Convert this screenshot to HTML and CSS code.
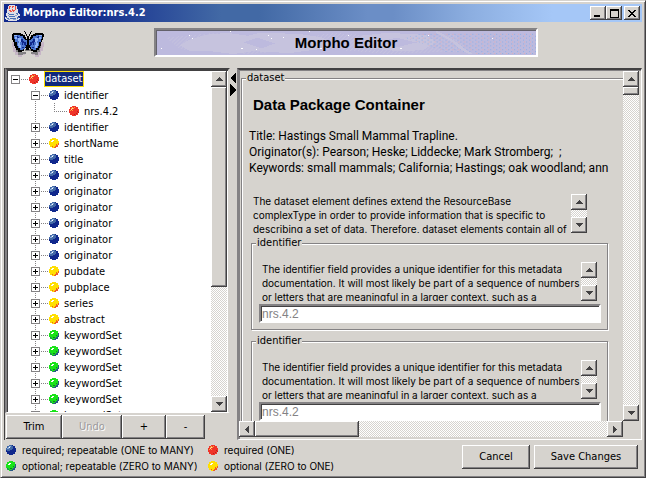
FILE: index.html
```
<!DOCTYPE html>
<html lang="en">
<head>
<meta charset="utf-8">
<title>Morpho Editor:nrs.4.2</title>
<link rel="stylesheet" href="styles.css">
</head>
<body>
<svg class="defs" aria-hidden="true">
  <symbol id="ball-blue" viewBox="0 0 10 10" shape-rendering="crispEdges">
    <path fill="#10288c" d="M3 0h4v1h2v2h1v4h-1v2h-2v1h-4v-1h-2v-2h-1v-4h1v-2h2z"/>
    <path fill="#4269a5" d="M3 0h3v1h1v3h-1v1h-2v1h-3v-1h-1v-2h1v-2h2z"/>
    <path fill="#8caede" d="M3 1h2v1h-2zM2 2h2v1h-2zM1 3h2v1h-2z"/>
    <path fill="#fff" d="M3 2h1v1h-1z"/>
  </symbol>
  <symbol id="ball-red" viewBox="0 0 10 10" shape-rendering="crispEdges">
    <path fill="#ef3429" d="M3 0h4v1h2v2h1v4h-1v2h-2v1h-4v-1h-2v-2h-1v-4h1v-2h2z"/>
    <path fill="#ffa23a" d="M3 1h1v1h-1zM5 1h1v1h-1zM2 2h1v1h-1zM4 2h1v1h-1zM1 4h1v1h-1zM3 4h1v1h-1z"/>
    <path fill="#ffdf9c" d="M3 2h1v1h-1zM2 3h1v1h-1z"/>
    <path fill="#b52020" d="M8 5h1v1h-1zM7 7h1v1h-1zM5 8h1v1h-1zM9 6h1v1h-1z"/>
  </symbol>
  <symbol id="ball-yellow" viewBox="0 0 10 10" shape-rendering="crispEdges">
    <path fill="#ffdf00" d="M3 0h4v1h2v2h1v4h-1v2h-2v1h-4v-1h-2v-2h-1v-4h1v-2h2z"/>
    <path fill="#fff" d="M3 2h2v1h-1v1h-2v-1h1z"/>
    <path fill="#ef5929" d="M9 5h1v2h-1v1h-1v-1h1zM7 6h1v1h-1zM6 8h1v-1h1v1h1v1h-2v1h-2v-1h1zM3 8h1v1h-1z"/>
  </symbol>
  <symbol id="ball-green" viewBox="0 0 10 10" shape-rendering="crispEdges">
    <path fill="#19e319" d="M3 0h4v1h2v2h1v4h-1v2h-2v1h-4v-1h-2v-2h-1v-4h1v-2h2z"/>
    <path fill="#fff" d="M3 2h2v1h-1v1h-2v-1h1z"/>
    <path fill="#295984" d="M9 3h1v4h-1v2h-2v1h-3v-1h2v-1h1v-1h1v-1h1zM1 7h1v1h1v1h-1z"/>
    <path fill="#107a29" d="M4 7h2v1h-2zM7 5h1v1h-1z"/>
  </symbol>
  <symbol id="up" viewBox="0 0 7 4" shape-rendering="crispEdges"><path fill="#424142" d="M3 0h1v1h1v1h1v1h1v1h-7v-1h1v-1h1v-1h1z"/></symbol>
  <symbol id="down" viewBox="0 0 7 4" shape-rendering="crispEdges"><path fill="#424142" d="M0 0h7v1h-1v1h-1v1h-1v1h-1v-1h-1v-1h-1v-1h-1z"/></symbol>
  <symbol id="left" viewBox="0 0 4 7" shape-rendering="crispEdges"><path fill="#424142" d="M4 0v7h-1v-1h-1v-1h-1v-1h-1v-1h1v-1h1v-1h1v-1z"/></symbol>
  <symbol id="right" viewBox="0 0 4 7" shape-rendering="crispEdges"><path fill="#424142" d="M0 0v7h1v-1h1v-1h1v-1h1v-1h-1v-1h-1v-1h-1v-1z"/></symbol>
</svg>

<div class="window">
  <header class="titlebar">
    <svg class="java" viewBox="0 0 16 16" shape-rendering="crispEdges" aria-hidden="true">
      <path fill="#dedfe7" d="M4 0h6v1h2v3h1v4h1v1h1v2h-2v2h2v1h-1v1h-2v1h-9v-1h-2v-1h-1v-2h2v-1h-1v-3h1v-4h1v-3z"/>
      <path fill="#ef5142" d="M4 1h2v1h-1v2h-1zM7 1h2v1h-1v1h-1zM10 1h1v4h-1zM4 5h2v1h1v1h-2v-1h-1zM7 4h1v1h2v1h-1v1h-1v-1h-1z"/>
      <path fill="#4a71b5" d="M3 8h1v1h5v1h-5v-1h-1zM11 8h2v2h-1v-1h-1zM4 11h6v1h-6zM1 12h1v1h2v1h-2v-1h-1zM5 13h6v1h-6zM12 12h2v1h-1v1h-1z"/>
      <path fill="#94a6ce" d="M3 10h1v1h-1zM10 10h1v1h-1zM3 14h2v1h-2zM8 14h3v1h-3zM11 10h1v1h-1z"/>
    </svg>
    <h1>Morpho Editor:nrs.4.2</h1>
    <div class="window-buttons">
      <button class="raised" aria-label="Minimize"><svg width="8" height="8" shape-rendering="crispEdges"><path d="M0 6h6v2h-6z"/></svg></button>
      <button class="raised" aria-label="Maximize"><svg width="9" height="9" shape-rendering="crispEdges"><path fill-rule="evenodd" d="M0 0h9v9h-9zM1 2v6h7v-6z"/></svg></button>
      <button class="raised close" aria-label="Close"><svg width="8" height="7" shape-rendering="crispEdges"><path d="M0 0h2v1h1v1h2v-1h1v-1h2v1h-1v1h-1v1h-1v1h1v1h1v1h1v1h-2v-1h-1v-1h-2v1h-1v1h-2v-1h1v-1h1v-1h1v-1h-1v-1h-1v-1h-1z"/></svg></button>
    </div>
  </header>

  <div class="brand">
    <svg class="butterfly" viewBox="0 0 32 26" shape-rendering="crispEdges" aria-hidden="true">
      <path fill="#c6b6c6" d="M0 11h5v6h4v5h4v2h-3v2h-4v-2h-3v-3h-2v-5h-1zM31 11h-4v6h-3v4h-4v3h3v2h4v-2h2v-4h2v-4h1v-4z"/>
      <path fill="#848284" d="M3 13h3v5h3v3h5v2h-3v1h-5v-3h-2v-4h-1zM29 13h-3v5h-3v3h-4v2h4v1h3v-3h2v-4h1zM13 18h6v2h-6z"/>
      <path fill="#000" d="M1 2h8v1h2v1h2v2h1v2h1v-3h-1v-2h-1v-2h-1v-1h1v1h1v2h1v2h2v-2h1v-2h1v-1h1v1h-1v2h-1v2h-1v3h1v-2h1v-2h2v-1h2v-1h8v1h1v3h-1v3h-1v2h-1v4h-1v2h-1v2h-2v2h-4v-1h-2v-2h-1v-1h-1v2h-3v-2h-1v1h-1v2h-2v1h-4v-2h-2v-2h-1v-2h-1v-4h-1v-2h-1v-3h-1v-3h1z"/>
      <path fill="#4a75ce" d="M2 4h6v1h3v2h1v1h1v1h2v5h-1v2h-1v2h-2v1h-3v-2h-2v-2h-1v-4h-2v-3h-1zM30 4h-6v1h-3v2h-1v1h-1v1h-2v5h1v2h1v2h2v1h3v-2h2v-2h1v-4h2v-3h1z"/>
      <path fill="#94b6f7" d="M2 4h3v1h-3zM6 7h3v1h1v1h-1v2h-1v3h1v3h-2v-2h-1v-3h1v-2h-1zM3 6h2v2h-2zM30 4h-3v1h3zM26 7h-3v1h-1v1h1v2h1v3h-1v3h2v-2h1v-3h-1v-2h1zM29 6h-2v2h2z"/>
      <path fill="#10288c" d="M5 5h1v1h1v1h-2zM9 8h2v2h1v1h2v4h-1v-1h-1v-2h-1v2h-1v-3h-1zM10 16h2v1h-2zM27 5h-1v1h-1v1h2zM23 8h-2v2h-1v1h-2v4h1v-1h1v-2h1v2h1v-3h1zM22 16h-2v1h2z"/>
    </svg>
    <div class="banner">
      <svg class="sky" viewBox="0 0 382 26" preserveAspectRatio="none" aria-hidden="true">
        <defs>
          <pattern id="mist" width="4" height="4" patternUnits="userSpaceOnUse"><path fill="#c6c3de" d="M0 0h1v1h-1zM2 2h1v1h-1zM1 3h1v1h-1zM3 1h1v1h-1z"/></pattern>
          <pattern id="haze" width="6" height="4" patternUnits="userSpaceOnUse"><path fill="#8caee7" d="M0 0h1v1h-1zM3 2h1v1h-1z"/><path fill="#deaeb5" d="M4 0h1v1h-1z"/></pattern>
        </defs>
        <g shape-rendering="crispEdges">
          <path fill="#c6c3de" d="M24 16l8-5 18-6 22-2 20 3 12-3 40 1 24 4 8 6-12 6-30 4-36-2-20 3-24-3-20 0zM206 6l26-3 40 2 10 8-14 8-24 1-30-3z"/>
          <path fill="url(#mist)" d="M10 8l50-5 60 8 60-8 80 6 40-5 14 18-80 3-70-6-70 6-70-5z"/>
          <path fill="#bdbade" d="M88 13l14-5 18 6-14 5zM226 12l16-4 20 5-20 5z"/>
          <path fill="url(#haze)" d="M250 8l20-5h112v23h-30l-60-3z"/>
          <path fill="#c6c3de" d="M282 1l6 3 5 3 8 5 10 8 8 5h-5l-9-6-8-7-8-5-8-4z"/>
          <path fill="#fff" d="M33 5h1v1h-1zM36 8h1v1h-1zM74 1h1v1h-1zM113 5h1v1h-1zM116 8h1v1h-1zM85 19h2v1h-2zM101 20h1v1h-1zM154 1h1v1h-1zM165 19h2v1h-2zM193 5h1v1h-1zM245 19h2v1h-2zM273 5h1v1h-1zM5 19h1v1h-1zM128 7h1v1h-1zM338 8h1v1h-1z"/>
        </g>
      </svg>
      <h2>Morpho Editor</h2>
    </div>
  </div>

  <main class="split">
    <section class="left-side">
      <div class="tree-pane">
        <ul class="tree">
          <li><div class="row"><button class="toggle open" aria-label="Collapse"></button><i class="link"></i><svg class="ball"><use href="#ball-red"/></svg><span class="selected">dataset</span></div>
            <ul class="branch">
              <li><div class="row"><button class="toggle open" aria-label="Collapse"></button><i class="link"></i><svg class="ball"><use href="#ball-blue"/></svg><span>identifier</span></div>
                <ul class="leaves"><li><div class="row"><i class="elbow"></i><svg class="ball"><use href="#ball-red"/></svg><span>nrs.4.2</span></div></li></ul>
              </li>
              <li><div class="row"><button class="toggle" aria-label="Expand"></button><i class="link"></i><svg class="ball"><use href="#ball-blue"/></svg><span>identifier</span></div></li>
              <li><div class="row"><button class="toggle" aria-label="Expand"></button><i class="link"></i><svg class="ball"><use href="#ball-yellow"/></svg><span>shortName</span></div></li>
              <li><div class="row"><button class="toggle" aria-label="Expand"></button><i class="link"></i><svg class="ball"><use href="#ball-blue"/></svg><span>title</span></div></li>
              <li><div class="row"><button class="toggle" aria-label="Expand"></button><i class="link"></i><svg class="ball"><use href="#ball-blue"/></svg><span>originator</span></div></li>
              <li><div class="row"><button class="toggle" aria-label="Expand"></button><i class="link"></i><svg class="ball"><use href="#ball-blue"/></svg><span>originator</span></div></li>
              <li><div class="row"><button class="toggle" aria-label="Expand"></button><i class="link"></i><svg class="ball"><use href="#ball-blue"/></svg><span>originator</span></div></li>
              <li><div class="row"><button class="toggle" aria-label="Expand"></button><i class="link"></i><svg class="ball"><use href="#ball-blue"/></svg><span>originator</span></div></li>
              <li><div class="row"><button class="toggle" aria-label="Expand"></button><i class="link"></i><svg class="ball"><use href="#ball-blue"/></svg><span>originator</span></div></li>
              <li><div class="row"><button class="toggle" aria-label="Expand"></button><i class="link"></i><svg class="ball"><use href="#ball-blue"/></svg><span>originator</span></div></li>
              <li><div class="row"><button class="toggle" aria-label="Expand"></button><i class="link"></i><svg class="ball"><use href="#ball-yellow"/></svg><span>pubdate</span></div></li>
              <li><div class="row"><button class="toggle" aria-label="Expand"></button><i class="link"></i><svg class="ball"><use href="#ball-yellow"/></svg><span>pubplace</span></div></li>
              <li><div class="row"><button class="toggle" aria-label="Expand"></button><i class="link"></i><svg class="ball"><use href="#ball-yellow"/></svg><span>series</span></div></li>
              <li><div class="row"><button class="toggle" aria-label="Expand"></button><i class="link"></i><svg class="ball"><use href="#ball-yellow"/></svg><span>abstract</span></div></li>
              <li><div class="row"><button class="toggle" aria-label="Expand"></button><i class="link"></i><svg class="ball"><use href="#ball-green"/></svg><span>keywordSet</span></div></li>
              <li><div class="row"><button class="toggle" aria-label="Expand"></button><i class="link"></i><svg class="ball"><use href="#ball-green"/></svg><span>keywordSet</span></div></li>
              <li><div class="row"><button class="toggle" aria-label="Expand"></button><i class="link"></i><svg class="ball"><use href="#ball-green"/></svg><span>keywordSet</span></div></li>
              <li><div class="row"><button class="toggle" aria-label="Expand"></button><i class="link"></i><svg class="ball"><use href="#ball-green"/></svg><span>keywordSet</span></div></li>
              <li><div class="row"><button class="toggle" aria-label="Expand"></button><i class="link"></i><svg class="ball"><use href="#ball-green"/></svg><span>keywordSet</span></div></li>
              <li><div class="row"><button class="toggle" aria-label="Expand"></button><i class="link"></i><svg class="ball"><use href="#ball-green"/></svg><span>keywordSet</span></div></li>
            </ul>
          </li>
        </ul>
        <div class="vbar">
          <button class="raised step" aria-label="Scroll up"><svg width="7" height="4"><use href="#up"/></svg></button>
          <div class="raised thumb tree-thumb"></div>
          <div class="track"></div>
          <button class="raised step" aria-label="Scroll down"><svg width="7" height="4"><use href="#down"/></svg></button>
        </div>
      </div>
      <div class="tree-actions">
        <button class="raised trim">Trim</button>
        <button class="raised undo" disabled>Undo</button>
        <button class="raised plus">+</button>
        <button class="raised minus">-</button>
      </div>
    </section>

    <div class="divider">
      <svg width="7" height="25" shape-rendering="crispEdges" aria-hidden="true"><path d="M6 0v12l-6-6zM0 12v12l6-6z"/></svg>
    </div>

    <section class="form-pane">
      <div class="form-view">
        <fieldset class="dataset">
          <legend>dataset</legend>
          <h3>Data Package Container</h3>
          <p class="summary">Title: Hastings Small Mammal Trapline.<br>Originator(s): Pearson; Heske; Liddecke; Mark Stromberg; &nbsp;;<br>Keywords: small mammals; California; Hastings; oak woodland; ann</p>
          <div class="help outer">
            <p>The dataset element defines extend the ResourceBase<br>complexType in order to provide information that is specific to<br>describing a set of data. Therefore, dataset elements contain all of</p>
            <div class="vbar mini">
              <button class="raised step" aria-label="Scroll up"><svg width="7" height="4"><use href="#up"/></svg></button>
              <div class="track"></div>
              <button class="raised step" aria-label="Scroll down"><svg width="7" height="4"><use href="#down"/></svg></button>
            </div>
          </div>
          <fieldset class="identifier">
            <legend>identifier</legend>
            <div class="help">
              <p>The identifier field provides a unique identifier for this metadata<br>documentation. It will most likely be part of a sequence of numbers<br>or letters that are meaningful in a larger context, such as a</p>
              <div class="vbar mini">
                <button class="raised step" aria-label="Scroll up"><svg width="7" height="4"><use href="#up"/></svg></button>
                <div class="track"></div>
                <button class="raised step" aria-label="Scroll down"><svg width="7" height="4"><use href="#down"/></svg></button>
              </div>
            </div>
            <input type="text" value="nrs.4.2" aria-label="identifier">
          </fieldset>
          <fieldset class="identifier">
            <legend>identifier</legend>
            <div class="help">
              <p>The identifier field provides a unique identifier for this metadata<br>documentation. It will most likely be part of a sequence of numbers<br>or letters that are meaningful in a larger context, such as a</p>
              <div class="vbar mini">
                <button class="raised step" aria-label="Scroll up"><svg width="7" height="4"><use href="#up"/></svg></button>
                <div class="track"></div>
                <button class="raised step" aria-label="Scroll down"><svg width="7" height="4"><use href="#down"/></svg></button>
              </div>
            </div>
            <input type="text" value="nrs.4.2" aria-label="identifier">
          </fieldset>
        </fieldset>
      </div>
      <div class="vbar">
        <button class="raised step" aria-label="Scroll up"><svg width="7" height="4"><use href="#up"/></svg></button>
        <div class="raised thumb form-thumb"></div>
        <div class="track"></div>
        <button class="raised step" aria-label="Scroll down"><svg width="7" height="4"><use href="#down"/></svg></button>
      </div>
      <div class="hbar">
        <button class="raised step" aria-label="Scroll left"><svg width="4" height="7"><use href="#left"/></svg></button>
        <div class="raised thumb"></div>
        <div class="track"></div>
        <button class="raised step" aria-label="Scroll right"><svg width="4" height="7"><use href="#right"/></svg></button>
      </div>
    </section>
  </main>

  <footer class="footer">
    <ul class="key">
      <li><svg class="ball"><use href="#ball-blue"/></svg>required; repeatable (ONE to MANY)</li>
      <li><svg class="ball"><use href="#ball-red"/></svg>required (ONE)</li>
      <li><svg class="ball"><use href="#ball-green"/></svg>optional; repeatable (ZERO to MANY)</li>
      <li><svg class="ball"><use href="#ball-yellow"/></svg>optional (ZERO to ONE)</li>
    </ul>
    <div class="dialog-actions">
      <button class="raised cancel">Cancel</button>
      <button class="raised save">Save Changes</button>
    </div>
  </footer>
</div>
</body>
</html>
```
FILE: styles.css
```
:root {
  --face: #d6d3ce;
  --shade: #848284;
  --dark: #424142;
  --ui: "DejaVu Sans Condensed", "DejaVu Sans", sans-serif;
  --text: "Liberation Sans", Arial, sans-serif;
  --small: Inter, "Liberation Sans", sans-serif;
}
* { box-sizing: border-box; }
body, h1, h2, h3, p, ul, fieldset { margin: 0; padding: 0; }
ul { list-style: none; }
body { font: 11px/16px var(--ui); color: #000; background: var(--face); }
svg { display: block; flex: none; }
.defs { position: absolute; width: 0; height: 0; }
button { font: inherit; color: inherit; padding: 0; border: 0; }

.window {
  height: 100vh;
  display: flex;
  flex-direction: column;
  padding: 3px;
  border: 1px solid;
  border-color: var(--face) var(--dark) var(--dark) var(--face);
  box-shadow: inset 1px 1px #fff, inset -1px -1px var(--shade);
  overflow: hidden;
}
.raised {
  background: var(--face);
  box-shadow: inset -1px -1px var(--dark), inset 1px 1px #fff, inset -2px -2px var(--shade);
  display: flex;
  align-items: center;
  justify-content: center;
}

.titlebar {
  flex: none;
  height: 18px;
  display: flex;
  align-items: center;
  padding: 0 2px 0 1px;
  background: linear-gradient(90deg, #10288c 12%, #4269a5 34%, #4269a5 40%, #6b8ec6 57%, #6b8ec6 61%, #8caee0 73%, #a5c7f7 86%);
}
.java { width: 16px; height: 16px; margin-right: 2px; }
.titlebar h1 { flex: 1; font: bold 11px/18px var(--ui); color: #fff; }
.window-buttons { display: flex; }
.window-buttons button { width: 16px; height: 14px; }
.window-buttons .close { margin-left: 2px; }

.brand {
  flex: none;
  height: 46px;
  display: flex;
  align-items: flex-start;
  padding: 6px 104px 0 8px;
}
.butterfly { width: 32px; height: 26px; margin: 3px 110px 0 0; }
.banner {
  flex: 1;
  height: 29px;
  display: grid;
  place-items: center;
  position: relative;
  border: 2px solid;
  border-color: var(--shade) #fff #fff var(--shade);
  background: #bdbade;
  box-shadow: inset 1px 1px #63616b;
}
.sky { position: absolute; inset: 0; width: 100%; height: 100%; }
.banner h2 { position: relative; font: bold 15px/16px var(--text); }

.split { flex: 1; min-height: 0; display: flex; }
.left-side { flex: 0 0 226px; display: flex; flex-direction: column; border-left: 1px solid var(--dark); }
.tree-pane {
  flex: 1;
  min-height: 0;
  display: flex;
  border: 2px solid;
  border-color: var(--dark) var(--face) #fff var(--shade);
  border-bottom-width: 1px;
  background: #fff;
  box-shadow: inset 1px 1px var(--dark);
  padding: 1px 1px 0 1px;
}
.tree { flex: 1; min-width: 0; overflow: hidden; padding-left: 3px; }
.row { display: flex; align-items: center; height: 16px; white-space: nowrap; }
.toggle {
  flex: none;
  width: 9px;
  height: 9px;
  border: 1px solid var(--shade);
  background:
    linear-gradient(#000, #000) 1px 3px / 5px 1px no-repeat,
    linear-gradient(#000, #000) 3px 1px / 1px 5px no-repeat,
    #fff;
}
.toggle.open { background: linear-gradient(#000, #000) 1px 3px / 5px 1px no-repeat, #fff; }
.link, .elbow { height: 1px; background: repeating-linear-gradient(90deg, var(--shade) 0 1px, transparent 1px 2px); }
.link { width: 7px; margin: 0 1px; }
.elbow { width: 14px; margin: 0 1px 0 3px; }
.ball { width: 10px; height: 10px; }
.row span { margin-left: 5px; padding-top: 2px; }
.row .selected { padding: 0 1px 0 0; line-height: 14px; color: #fff; background: #10287b; border: 1px solid #ffdf00; }
.branch {
  margin-left: 20px;
  background: repeating-linear-gradient(var(--shade) 0 1px, #fff 1px 2px) 4px 0 / 1px 100% no-repeat;
}
.leaves {
  margin-left: 20px;
  background: repeating-linear-gradient(var(--shade) 0 1px, #fff 1px 2px) 3px 0 / 1px 8px no-repeat;
}

.vbar { width: 16px; display: flex; flex-direction: column; }
.track { flex: 1; background: repeating-conic-gradient(#fff 0 25%, var(--face) 0 50%) 0 0 / 2px 2px; }
.step { flex: none; width: 16px; height: 16px; }
.thumb { flex: none; }
.tree-thumb { height: 200px; }
.form-thumb { height: 8px; }

.tree-actions { flex: none; display: flex; height: 27px; padding: 2px 0 1px 1px; }
.trim { width: 56px; }
.undo { width: 60px; }
.plus { width: 44px; }
.minus { width: 39px; }
.tree-actions .undo { color: #9c9a9c; text-shadow: 1px 1px #fff; }

.divider { flex: 0 0 7px; padding-top: 4px; }

.form-pane {
  flex: 1;
  min-width: 0;
  display: grid;
  grid-template-columns: minmax(0, 1fr) 16px;
  grid-template-rows: minmax(0, 1fr) 17px;
  padding: 1px 2px 1px 0;
  border: 2px solid;
  border-color: var(--dark) #fff #fff var(--shade);
  border-right-width: 1px;
  border-bottom-width: 1px;
  box-shadow: inset 1px 1px var(--shade);
}
.form-view { overflow: hidden; padding: 0 0 0 2px; }
.dataset { width: 400px; }
fieldset { min-width: 0; border: 1px solid var(--shade); box-shadow: inset 1px 1px #fff, 1px 1px #fff; }
legend { margin-left: 4px; padding: 0 1px; line-height: 14px; background: var(--face); }
.dataset h3 { margin: 11px 0 0 11px; font: bold 15px/18px var(--text); }
.summary { margin: 14px 0 18px 7px; font: 12px/16px Roboto, var(--text); white-space: nowrap; }
.help { display: flex; height: 39px; width: 335px; margin: 12px 0 3px 10px; }
.help.outer { margin: 0 0 3px 11px; width: 334px; }
.help p { flex: 1; min-width: 0; overflow: hidden; font: 10px/14px var(--small); white-space: nowrap; }
.help .step { height: 16px; }
.identifier { margin: 0 0 4px 9px; width: 357px; padding-bottom: 6px; }
.identifier input {
  display: block;
  width: 342px;
  height: 19px;
  margin-left: 7px;
  padding: 0 1px;
  border: 2px solid;
  border-color: var(--shade) #fff #fff var(--shade);
  box-shadow: inset 1px 1px var(--dark);
  font: 12px/15px var(--text);
  color: #848284;
  background: #fff;
}
.hbar { display: flex; height: 16px; grid-column: 1; }
.hbar .thumb { width: 104px; }

.footer { flex: none; height: 34px; display: flex; justify-content: space-between; }
.key {
  display: grid;
  grid-template-columns: 202px auto;
  grid-auto-rows: 16px;
  padding: 2px 0 0 2px;
  font: 10px/16px var(--small);
}
.key li { display: flex; align-items: center; gap: 6px; white-space: nowrap; }
.dialog-actions { display: flex; gap: 4px; padding: 5px 4px 0 0; }
.dialog-actions button { height: 24px; }
.cancel { width: 68px; }
.save { width: 104px; }
```
